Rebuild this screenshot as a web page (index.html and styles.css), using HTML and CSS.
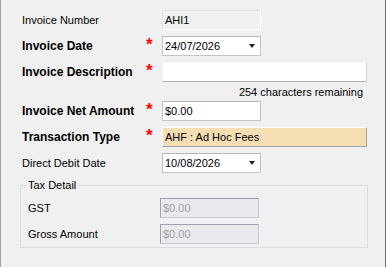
FILE: index.html
```html
<html>
<head>
<link rel="stylesheet" href="styles.css">
</head>
<body>
    <div class="form">
        <div class="row">
            <span class="label">Invoice Number</span>
            <span class="req"></span>
            <div class="field field-readonly">AHI1</div>
        </div>
        <div class="row">
            <span class="label label-bold">Invoice Date</span>
            <span class="req">*</span>
            <div class="field field-select">24/07/2026<span class="arrow"></span></div>
        </div>
        <div class="row">
            <span class="label label-bold">Invoice Description</span>
            <span class="req">*</span>
            <div class="field field-wide field-text"></div>
        </div>
        <div class="remaining">254 characters remaining</div>
        <div class="row">
            <span class="label label-bold">Invoice Net Amount</span>
            <span class="req">*</span>
            <div class="field">$0.00</div>
        </div>
        <div class="row">
            <span class="label label-bold">Transaction Type</span>
            <span class="req">*</span>
            <div class="field field-wide field-lookup">AHF : Ad Hoc Fees</div>
        </div>
        <div class="row">
            <span class="label">Direct Debit Date</span>
            <span class="req"></span>
            <div class="field field-select">10/08/2026<span class="arrow"></span></div>
        </div>
        <fieldset class="group">
            <legend>Tax Detail</legend>
            <div class="row">
                <span class="label label-group">GST</span>
                <div class="field field-disabled">$0.00</div>
            </div>
            <div class="row">
                <span class="label label-group">Gross Amount</span>
                <div class="field field-disabled">$0.00</div>
            </div>
        </fieldset>
    </div>
</body>
</html>
```
FILE: styles.css
```css
* {
    box-sizing: border-box;
}

body {
    margin: 0;
    font-family: "Liberation Sans", Arial, sans-serif;
    font-size: 11px;
    color: #000;
}

.form {
    width: 386px;
    height: 267px;
    background: #f0f0f0;
    border-left: 1px solid #a0a0a0;
    border-right: 1px solid #707070;
    padding: 10px 0 0 21px;
}

.row {
    display: flex;
    align-items: center;
    height: 20px;
    margin-bottom: 6px;
}

.label {
    width: 124px;
    line-height: 13px;
}

.label-bold {
    font-size: 12px;
    font-weight: bold;
}

.label-group {
    width: 132px;
}

.req {
    width: 16px;
    height: 20px;
    color: #ff0000;
    font-size: 17px;
    font-weight: bold;
    line-height: 18px;
}

.field {
    width: 99px;
    height: 20px;
    padding: 0 2px;
    display: flex;
    align-items: center;
    justify-content: space-between;
    background: #fff;
    border: 1px solid #c4c4c4;
    border-top-color: #b8b8b8;
}

.field-wide {
    width: 205px;
}

.field-readonly {
    background: #f0f0f0;
    border-color: #e2e2e2 #fff #fff #e2e2e2;
}

.field-text {
    border-color: #f4f4f4 #d0d0d0 #b0b0b0 #f4f4f4;
}

.field-lookup {
    background: #f5deb3;
    border-color: #fff #a0a0a0 #a0a0a0 #fff;
}

.field-disabled {
    background: #e9e9ee;
    color: #a0a0a0;
    border-color: #a0a0b0 #c8c8d0 #c8c8d0 #a0a0b0;
}

.arrow {
    margin-right: 3px;
    border-left: 3.5px solid transparent;
    border-right: 3.5px solid transparent;
    border-top: 4px solid #222;
}

.remaining {
    width: 341px;
    height: 13px;
    margin: -2px 0 2px;
    line-height: 13px;
    text-align: right;
}

.group {
    width: 348px;
    margin: 0 0 0 -2px;
    padding: 6px 0 3px 5px;
    border: 1px solid #dcdcdc;
}

.group legend {
    padding: 0 2px;
    line-height: 13px;
}

.group .row {
    padding-left: 2px;
}

.group .row:last-child {
    margin-bottom: 0;
}
```
